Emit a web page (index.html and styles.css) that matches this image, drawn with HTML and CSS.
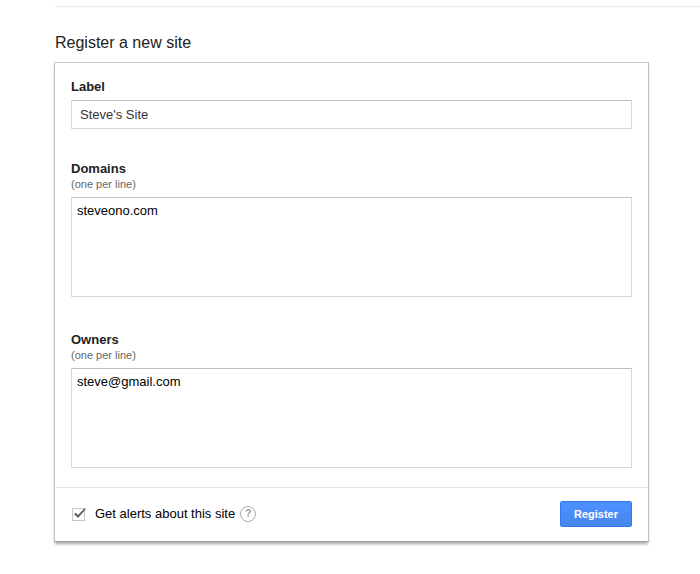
FILE: index.html
```html
<!DOCTYPE html>
<html lang="en">
<head>
<meta charset="utf-8">
<title>Register a new site</title>
<link rel="stylesheet" href="styles.css">
</head>
<body>
<main class="page">
  <h1 class="title">Register a new site</h1>
  <form class="card">
    <div class="fields">
      <div class="field field-label">
        <label class="name" for="label">Label</label>
        <input class="box input" id="label" type="text" value="Steve's Site">
      </div>
      <div class="field">
        <label class="name" for="domains">Domains</label>
        <span class="hint">(one per line)</span>
        <textarea class="box area" id="domains" spellcheck="false">steveono.com</textarea>
      </div>
      <div class="field">
        <label class="name" for="owners">Owners</label>
        <span class="hint">(one per line)</span>
        <textarea class="box area" id="owners" spellcheck="false">steve@gmail.com</textarea>
      </div>
    </div>
    <div class="footer">
      <svg class="check" width="16" height="16" viewBox="0 0 16 16">
        <rect x="1.5" y="2.5" width="12" height="12" fill="#fff" stroke="#c6c6c6"/>
        <path d="M3 8.2 L4.8 6.7 L7 9 L13.6 2.2 L15 3.1 L7.1 12 Z" fill="#606060"/>
      </svg>
      <span class="alerts">Get alerts about this site</span>
      <span class="help">?</span>
      <button class="register" type="button">Register</button>
    </div>
  </form>
</main>
</body>
</html>
```

FILE: styles.css
```css
* {
  box-sizing: border-box;
}

body {
  margin: 0;
  background: #fff;
  color: #222;
  font-family: "Liberation Sans", Arial, sans-serif;
  font-size: 13px;
}

.page {
  width: 700px;
  min-height: 574px;
  padding-top: 6px;
  padding-left: 54px;
}

.page::before {
  content: "";
  display: block;
  height: 1px;
  margin-left: 1px;
  background: #ebebeb;
}

.title {
  margin: 26px 0 9px 1px;
  font-size: 16px;
  font-weight: 400;
  line-height: 20px;
}

.card {
  width: 595px;
  height: 480px;
  border: 1px solid #c2c2c2;
  border-top-color: #cacaca;
  border-bottom-color: #a2a2a2;
  box-shadow: 0 3px 3px -1px rgba(0, 0, 0, 0.35);
}

.fields {
  height: 424px;
  padding: 16px 16px 0;
}

.field {
  display: flex;
  flex-direction: column;
  height: 171px;
}

.field-label {
  height: 82px;
}

.name {
  height: 16px;
  font-weight: 700;
  line-height: 16px;
}

.hint {
  height: 15px;
  color: #666;
  font-size: 11px;
  line-height: 15px;
}

.box {
  display: block;
  width: 561px;
  margin: 0;
  border: 1px solid #d9d9d9;
  border-top-color: #c0c0c0;
  border-radius: 0;
  outline: 0;
  background: #fff;
  font: 13px/16px "Liberation Sans", Arial, sans-serif;
}

.input {
  height: 29px;
  margin-top: 5px;
  padding: 0 8px;
  color: #333;
}

.area {
  height: 100px;
  margin-top: 5px;
  padding: 5px;
  color: #000;
  resize: none;
}

.footer {
  display: flex;
  align-items: center;
  height: 53px;
  padding: 0 16px;
  border-top: 1px solid #e5e5e5;
}

.check {
  margin-right: 8px;
}

.alerts {
  height: 16px;
  color: #000;
  line-height: 16px;
}

.help {
  width: 16px;
  height: 16px;
  margin-left: 5px;
  border: 1px solid #a9a9a9;
  border-radius: 50%;
  color: #999;
  font-size: 10px;
  font-weight: 700;
  line-height: 14px;
  text-align: center;
}

.register {
  width: 72px;
  height: 26px;
  margin-left: auto;
  padding: 0;
  border: 1px solid #3079ed;
  border-radius: 2px;
  background: linear-gradient(#4d90fe, #4787ed);
  color: #fff;
  font: 700 11px/24px "Liberation Sans", Arial, sans-serif;
}
```
